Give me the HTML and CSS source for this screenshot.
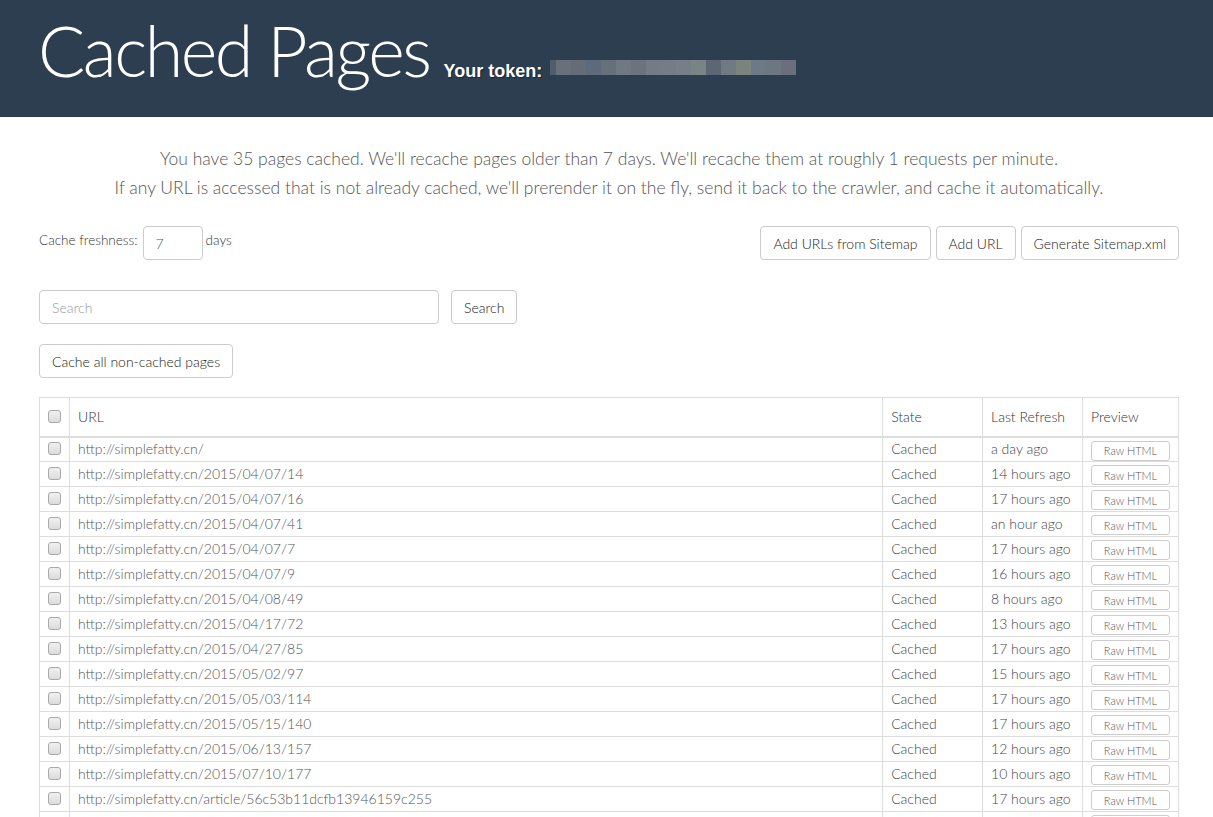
FILE: index.html
```html
<!DOCTYPE html>
<html>
<head>
<meta charset="utf-8">
<title>Cached Pages</title>
<link rel="stylesheet" href="styles.css">
</head>
<body>
<header class="header">
  <div class="container header-inner">
    <h1 class="title">Cached Pages</h1>
    <span class="token-label">Your token:</span>
    <span class="token">
      <i style="background:#4f5d6e;width:6px"></i><i style="background:#68707b"></i><i style="background:#656b77"></i><i style="background:#5d6a7d"></i><i style="background:#66707a"></i><i style="background:#707882"></i><i style="background:#6b737e"></i><i style="background:#737c85"></i><i style="background:#747d87"></i><i style="background:#767f88"></i><i style="background:#798585"></i><i style="background:#5c6674"></i><i style="background:#6f7a82"></i><i style="background:#7b837d"></i><i style="background:#6d7986"></i><i style="background:#6c7780"></i><i style="background:#6b6e7d"></i>
    </span>
  </div>
</header>

<main class="container">
  <p class="intro">You have 35 pages cached. We'll recache pages older than 7 days. We'll recache them at roughly 1 requests per minute.<br>If any URL is accessed that is not already cached, we'll prerender it on the fly, send it back to the crawler, and cache it automatically.</p>

  <div class="toolbar">
    <div class="freshness">
      <span>Cache freshness:</span>
      <input class="input small" type="text" value="7">
      <span>days</span>
    </div>
    <div class="actions">
      <button class="btn">Add URLs from Sitemap</button>
      <button class="btn">Add URL</button>
      <button class="btn">Generate Sitemap.xml</button>
    </div>
  </div>

  <div class="search-row">
    <input class="input search" type="text" placeholder="Search">
    <button class="btn">Search</button>
  </div>

  <div class="cache-row">
    <button class="btn">Cache all non-cached pages</button>
  </div>

  <table class="table">
    <thead>
      <tr>
        <th class="c-check"><input type="checkbox" class="cb"></th>
        <th class="c-url">URL</th>
        <th class="c-state">State</th>
        <th class="c-refresh">Last Refresh</th>
        <th class="c-prev">Preview</th>
      </tr>
    </thead>
    <tbody>
      <tr><td class="c-check"><input type="checkbox" class="cb"></td><td class="url">http://simplefatty.cn/</td><td>Cached</td><td>a day ago</td><td><button class="btn-xs">Raw HTML</button></td></tr>
      <tr><td class="c-check"><input type="checkbox" class="cb"></td><td class="url">http://simplefatty.cn/2015/04/07/14</td><td>Cached</td><td>14 hours ago</td><td><button class="btn-xs">Raw HTML</button></td></tr>
      <tr><td class="c-check"><input type="checkbox" class="cb"></td><td class="url">http://simplefatty.cn/2015/04/07/16</td><td>Cached</td><td>17 hours ago</td><td><button class="btn-xs">Raw HTML</button></td></tr>
      <tr><td class="c-check"><input type="checkbox" class="cb"></td><td class="url">http://simplefatty.cn/2015/04/07/41</td><td>Cached</td><td>an hour ago</td><td><button class="btn-xs">Raw HTML</button></td></tr>
      <tr><td class="c-check"><input type="checkbox" class="cb"></td><td class="url">http://simplefatty.cn/2015/04/07/7</td><td>Cached</td><td>17 hours ago</td><td><button class="btn-xs">Raw HTML</button></td></tr>
      <tr><td class="c-check"><input type="checkbox" class="cb"></td><td class="url">http://simplefatty.cn/2015/04/07/9</td><td>Cached</td><td>16 hours ago</td><td><button class="btn-xs">Raw HTML</button></td></tr>
      <tr><td class="c-check"><input type="checkbox" class="cb"></td><td class="url">http://simplefatty.cn/2015/04/08/49</td><td>Cached</td><td>8 hours ago</td><td><button class="btn-xs">Raw HTML</button></td></tr>
      <tr><td class="c-check"><input type="checkbox" class="cb"></td><td class="url">http://simplefatty.cn/2015/04/17/72</td><td>Cached</td><td>13 hours ago</td><td><button class="btn-xs">Raw HTML</button></td></tr>
      <tr><td class="c-check"><input type="checkbox" class="cb"></td><td class="url">http://simplefatty.cn/2015/04/27/85</td><td>Cached</td><td>17 hours ago</td><td><button class="btn-xs">Raw HTML</button></td></tr>
      <tr><td class="c-check"><input type="checkbox" class="cb"></td><td class="url">http://simplefatty.cn/2015/05/02/97</td><td>Cached</td><td>15 hours ago</td><td><button class="btn-xs">Raw HTML</button></td></tr>
      <tr><td class="c-check"><input type="checkbox" class="cb"></td><td class="url">http://simplefatty.cn/2015/05/03/114</td><td>Cached</td><td>17 hours ago</td><td><button class="btn-xs">Raw HTML</button></td></tr>
      <tr><td class="c-check"><input type="checkbox" class="cb"></td><td class="url">http://simplefatty.cn/2015/05/15/140</td><td>Cached</td><td>17 hours ago</td><td><button class="btn-xs">Raw HTML</button></td></tr>
      <tr><td class="c-check"><input type="checkbox" class="cb"></td><td class="url">http://simplefatty.cn/2015/06/13/157</td><td>Cached</td><td>12 hours ago</td><td><button class="btn-xs">Raw HTML</button></td></tr>
      <tr><td class="c-check"><input type="checkbox" class="cb"></td><td class="url">http://simplefatty.cn/2015/07/10/177</td><td>Cached</td><td>10 hours ago</td><td><button class="btn-xs">Raw HTML</button></td></tr>
      <tr><td class="c-check"><input type="checkbox" class="cb"></td><td class="url">http://simplefatty.cn/article/56c53b11dcfb13946159c255</td><td>Cached</td><td>17 hours ago</td><td><button class="btn-xs">Raw HTML</button></td></tr>
      <tr><td class="c-check"><input type="checkbox" class="cb"></td><td class="url">http://simplefatty.cn/article/56c53b11dcfb13946159c256</td><td>Cached</td><td>17 hours ago</td><td><button class="btn-xs">Raw HTML</button></td></tr>
      <tr><td class="c-check"><input type="checkbox" class="cb"></td><td class="url">http://simplefatty.cn/article/56c53b11dcfb13946159c257</td><td>Cached</td><td>17 hours ago</td><td><button class="btn-xs">Raw HTML</button></td></tr>
    </tbody>
  </table>
</main>
</body>
</html>
```

FILE: styles.css
```css
* { box-sizing: border-box; }
html, body { margin: 0; padding: 0; }
body {
  font-family: Lato, "Open Sans", sans-serif;
  font-size: 14px;
  font-weight: 300;
  color: #555;
  background: #fff;
}
.container {
  width: 1140px;
  margin-left: 39px;
}
.header {
  background: #2c3e50;
  height: 117px;
}
.header-inner {
  display: flex;
  align-items: baseline;
  padding-top: 8px;
}
.title {
  margin: 0;
  font-family: Lato, sans-serif;
  font-weight: 300;
  font-size: 70px;
  line-height: 84px;
  color: #fff;
  letter-spacing: -2.5px;
  margin-left: -1px;
}
.token-label {
  font-family: "Liberation Sans", Arial, sans-serif;
  font-weight: bold;
  font-size: 18px;
  color: #fff;
  margin-left: 14px;
  text-shadow: 1px 1px 1px rgba(0,0,0,0.4);
}
.token {
  display: inline-flex;
  height: 15px;
  margin-left: 8px;
  align-self: center;
  position: relative;
  top: 17px;
}
.token i {
  display: block;
  width: 15px;
  height: 15px;
}
.intro {
  text-align: center;
  font-size: 17.5px;
  font-weight: 300;
  line-height: 29px;
  color: #555;
  margin: 27px 0 0;
}
.toolbar {
  display: flex;
  justify-content: space-between;
  align-items: flex-start;
  margin-top: 24px;
}
.freshness {
  display: flex;
  align-items: flex-start;
  font-size: 13.5px;
  color: #333;
  line-height: 28px;
}
.freshness span:first-child { margin-right: 5px; }
.freshness span:last-child { margin-left: 3px; }
.input {
  height: 34px;
  border: 1px solid #ccc;
  border-radius: 4px;
  font-family: Lato, sans-serif;
  font-size: 14px;
  font-weight: 300;
  color: #555;
  padding: 6px 12px;
  outline: none;
}
.input.small { width: 60px; }
.input::placeholder { color: #999; font-weight: 300; }
.actions {
  display: flex;
  gap: 5px;
}
.btn {
  height: 34px;
  border: 1px solid #ccc;
  border-radius: 4px;
  background: #fff;
  font-family: Lato, sans-serif;
  font-size: 14px;
  font-weight: 300;
  color: #222;
  padding: 6px 12px;
}
.search-row {
  display: flex;
  gap: 12px;
  margin-top: 30px;
}
.input.search { width: 400px; }
.cache-row { margin-top: 20px; }
.table {
  width: 1140px;
  margin-top: 19px;
  border-collapse: collapse;
  border: 1px solid #ddd;
  font-size: 14px;
  color: #444;
}
.table th, .table td {
  border: 1px solid #ddd;
  text-align: left;
  padding: 0 8px;
}
.table th {
  font-weight: 300;
  height: 39px;
  border-bottom: 2px solid #ddd;
  color: #333;
}
.table td {
  height: 25px;
  line-height: 22px;
}
.table td.url { color: #555; }
.c-check { width: 30px; text-align: center !important; padding: 0 !important; }
.c-url { width: 814px; }
.c-state { width: 100px; }
.c-refresh { width: 100px; }
.c-prev { width: 95px; }
.cb {
  appearance: none;
  -webkit-appearance: none;
  width: 13px;
  height: 13px;
  margin: 0;
  vertical-align: middle;
  border: 1px solid #a9a9a9;
  border-radius: 3px;
  background: linear-gradient(#f0f0f0, #dcdcdc);
  position: relative;
  top: -2px;
}
.btn-xs {
  width: 79px;
  height: 20px;
  border: 1px solid #ccc;
  border-radius: 3px;
  background: #fff;
  font-family: Lato, sans-serif;
  font-size: 11px;
  font-weight: 300;
  color: #555;
  padding: 0;
  vertical-align: middle;
}
```
